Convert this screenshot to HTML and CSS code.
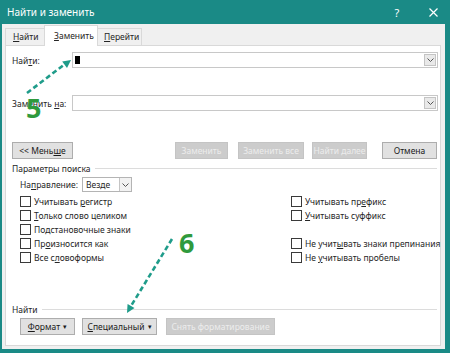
FILE: index.html
```html
<!DOCTYPE html>
<html lang="ru">
<head>
<meta charset="utf-8">
<title>Найти и заменить</title>
<link rel="stylesheet" href="styles.css">
</head>
<body>
<div class="titlebar">
  <span class="title">Найти и заменить</span>
  <span class="tb-help">?</span>
  <span class="tb-close"><svg width="9" height="9" viewBox="0 0 9 9"><path d="M0.5 0.5 L8.5 8.5 M8.5 0.5 L0.5 8.5" stroke="#fff" stroke-width="1.2" fill="none"/></svg></span>
</div>
<div class="frame">
  <div class="tabs">
    <div class="tab t1"><span><u>Н</u>айти</span></div>
    <div class="tab t2 active"><span><u>З</u>аменить</span></div>
    <div class="tab t3"><span><u>П</u>ерейти</span></div>
  </div>
  <div class="panel">
    <div class="field">
      <span class="flabel">Най<u>т</u>и:</span>
      <div class="combo"><span class="caret"></span><span class="drop"><svg width="7" height="4" viewBox="0 0 7 4"><path d="M0.5 0.5 L3.5 3.5 L6.5 0.5" stroke="#555" fill="none"/></svg></span></div>
    </div>
    <div class="field field2">
      <span class="flabel">Заменить <u>н</u>а:</span>
      <div class="combo"><span class="drop"><svg width="7" height="4" viewBox="0 0 7 4"><path d="M0.5 0.5 L3.5 3.5 L6.5 0.5" stroke="#555" fill="none"/></svg></span></div>
    </div>
    <div class="btnrow">
      <div class="btn b-less"><span>&lt;&lt; Мень<u>ш</u>е</span></div>
      <div class="btn dis b-rep"><span>Заменить</span></div>
      <div class="btn dis b-repall"><span>Заменить все</span></div>
      <div class="btn dis b-next"><span>Найти далее</span></div>
      <div class="btn b-cancel"><span>Отмена</span></div>
    </div>
    <div class="group g1"><span>Параметры поиска</span></div>
    <div class="dirrow">
      <span class="dirlabel">На<u>п</u>равление:</span>
      <div class="select"><span class="sel-text">Везде</span><span class="sel-drop"><svg width="7" height="4" viewBox="0 0 7 4"><path d="M0.5 0.5 L3.5 3.5 L6.5 0.5" stroke="#555" fill="none"/></svg></span></div>
    </div>
    <div class="checks">
      <div class="chk"><span class="box"></span><span>Учитывать <u>р</u>егистр</span></div>
      <div class="chk"><span class="box"></span><span>Учитывать пр<u>е</u>фикс</span></div>
      <div class="chk"><span class="box"></span><span><u>Т</u>олько слово целиком</span></div>
      <div class="chk"><span class="box"></span><span><u>У</u>читывать суффикс</span></div>
      <div class="chk"><span class="box"></span><span>По<u>д</u>становочные знаки</span></div>
      <div class="chk empty"></div>
      <div class="chk"><span class="box"></span><span>Пр<u>о</u>износится как</span></div>
      <div class="chk"><span class="box"></span><span>Не учит<u>ы</u>вать знаки препинания</span></div>
      <div class="chk"><span class="box"></span><span>Все с<u>л</u>овоформы</span></div>
      <div class="chk"><span class="box"></span><span>Не <u>у</u>читывать пробелы</span></div>
    </div>
    <div class="group g2"><span>Найти</span></div>
    <div class="btnrow2">
      <div class="btn b-fmt"><span><u>Ф</u>ормат</span><span class="tri">▾</span></div>
      <div class="btn b-spec"><span><u>С</u>пециальный</span><span class="tri">▾</span></div>
      <div class="btn dis b-clear"><span>Снять форматирование</span></div>
    </div>
  </div>
</div>
<svg class="overlay" width="450" height="353" viewBox="0 0 450 353">
  <g stroke="#1f9c8a" stroke-width="2.6" stroke-dasharray="5 3" fill="none">
    <path d="M27 93 L65 64"/>
    <path d="M172 239 L131 306"/>
  </g>
  <g fill="#1f9c8a">
    <path d="M71 60 L67 68 L62.2 61.6 Z"/>
    <path d="M127 313 L134.5 308.1 L127.6 304.1 Z"/>
  </g>
  <text x="26" y="118" class="num">5</text>
  <text x="179" y="253" class="num">6</text>
</svg>
</body>
</html>
```

FILE: styles.css
```css
* { box-sizing: border-box; }
html, body { margin: 0; padding: 0; }
body {
  width: 450px;
  height: 353px;
  background: #1a8a86;
  font-family: "Noto Sans", "Open Sans", sans-serif;
  font-size: 8.5px;
  color: #262626;
  position: relative;
  overflow: hidden;
}
u { text-decoration: underline; text-underline-offset: 1px; }

.titlebar {
  height: 24px;
  display: flex;
  align-items: center;
  color: #fff;
  padding: 0 4px 0 7px;
}
.title { flex: 1; font-size: 10px; }
.tb-help { width: 20px; text-align: center; font-size: 11px; margin-right: 13px; }
.tb-close { width: 26px; display: flex; justify-content: center; align-items: center; }

.frame {
  margin-left: 2px;
  width: 443px;
  height: 325px;
  background: #f0f0f0;
  padding: 0 4px 3px 3px;
  display: flex;
  flex-direction: column;
}
.tabs {
  height: 21px;
  display: flex;
  align-items: flex-end;
}
.tab {
  height: 17px;
  line-height: 15px;
  border: 1px solid #d9d9d9;
  border-bottom: none;
  padding-left: 7px;
  background: #f0f0f0;
}
.t1 { width: 39px; border-right: none; }
.t2 { width: 54px; padding-left: 9px; }
.t3 { width: 44px; border-left: none; padding-left: 6px; }
.tab.active {
  height: 21px;
  line-height: 19px;
  background: #fff;
  margin-bottom: -1px;
  position: relative;
  z-index: 1;
}

.panel {
  flex: 1;
  background: #fff;
  border: 1px solid #d9d9d9;
  padding: 6px 2px 0 6px;
  display: flex;
  flex-direction: column;
}
.field { display: flex; height: 16px; align-items: center; }
.field2 { margin-top: 27px; }
.flabel { width: 60px; }
.combo {
  flex: 1;
  height: 16px;
  border: 1px solid #c8c8c8;
  display: flex;
  align-items: center;
  padding: 0 1px 0 2px;
}
.caret { width: 5px; height: 8px; background: #000; }
.drop {
  margin-left: auto;
  width: 12px;
  height: 12px;
  background: #e9e9e9;
  border: 1px solid #c4c4c4;
  display: flex;
  align-items: center;
  justify-content: center;
}

.btnrow { display: flex; margin-top: 31px; height: 17px; padding-right: 1px; }
.btn {
  height: 17px;
  border: 1px solid #adadad;
  background: #e1e1e1;
  display: flex;
  align-items: center;
  justify-content: center;
  white-space: nowrap;
  color: #1a1a1a;
}
.btn.dis { background: #cccccc; border-color: #c4c4c4; color: #ececec; }
.b-less { width: 61px; }
.b-rep { width: 53px; margin-left: auto; }
.b-repall { width: 66px; margin-left: 10px; }
.b-next { width: 55px; margin-left: 8px; }
.b-cancel { width: 55px; margin-left: 15px; }

.group {
  display: flex;
  align-items: center;
  height: 12px;
  padding-right: 1px;
}
.group::after {
  content: "";
  flex: 1;
  height: 1px;
  background: #dcdcdc;
  margin-left: 4px;
}
.g1 { margin-top: 3px; }
.g2 { margin-top: 39px; }

.dirrow { display: flex; align-items: center; height: 15px; margin-top: 3px; padding-left: 8px; }
.dirlabel { width: 62px; }
.select {
  width: 50px;
  height: 15px;
  border: 1px solid #b4b4b4;
  display: flex;
  align-items: center;
}
.sel-text { flex: 1; padding-left: 3px; }
.sel-drop {
  width: 12px;
  height: 13px;
  border-left: 1px solid #c4c4c4;
  background: #f2f2f2;
  display: flex;
  align-items: center;
  justify-content: center;
}

.checks {
  display: grid;
  grid-template-columns: 271px 1fr;
  grid-auto-rows: 14px;
  margin-top: 2px;
  padding-left: 8px;
}
.chk { display: flex; align-items: center; white-space: nowrap; }
.box {
  width: 11px;
  height: 11px;
  border: 1px solid #3a3a3a;
  background: #fff;
  margin-right: 3px;
  flex: none;
}

.btnrow2 { display: flex; margin-top: 3px; padding-left: 8px; }
.b-fmt { width: 55px; }
.b-spec { width: 75px; margin-left: 7px; }
.b-clear { width: 109px; margin-left: 9px; }
.tri { font-size: 7px; margin-left: 3px; }

.overlay { position: absolute; left: 0; top: 0; pointer-events: none; }
.num {
  font-family: "Noto Sans", sans-serif;
  font-weight: bold;
  font-size: 27px;
  fill: #2f9a3d;
}
```
